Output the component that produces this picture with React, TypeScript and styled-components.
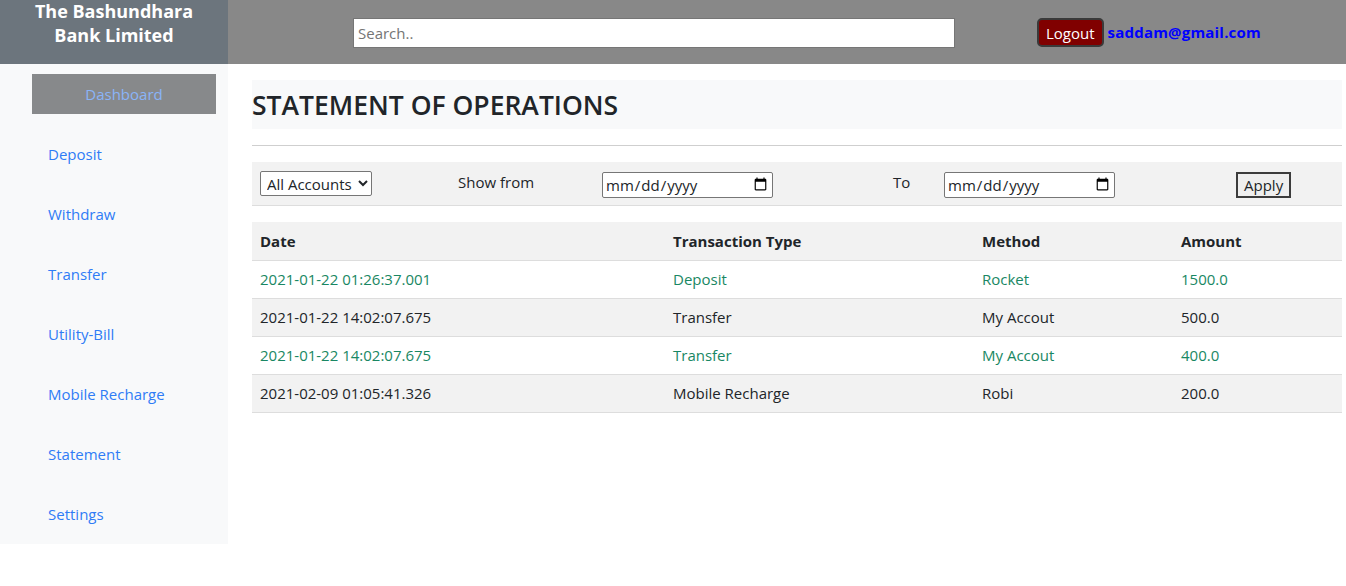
import React from "react";
import styled, { createGlobalStyle } from "styled-components";

const Global = createGlobalStyle`
  html, body { margin: 0; padding: 0; background: #fff; }
  body { font-family: "Open Sans", "Noto Sans", Arial, sans-serif; font-size: 15px; color: #212529; }
  * { box-sizing: border-box; }
`;

const Page = styled.div`
  width: 1346px;
`;

const Header = styled.header`
  display: grid;
  grid-template-columns: 228px 1fr;
  height: 64px;
`;

const Brand = styled.div`
  background: #6c757d;
  color: #fff;
  font-weight: 700;
  font-size: 18px;
  line-height: 24px;
  text-align: center;
  padding-top: 0;
`;

const BrandText = styled.div`
  margin-top: -1px;
`;

const TopBar = styled.div`
  background: #888888;
  display: flex;
  align-items: center;
  padding-left: 125px;
`;

const Search = styled.input`
  width: 602px;
  height: 30px;
  border: 1px solid #767676;
  padding: 1px 4px;
  font: inherit;
  font-size: 15px;
  color: #212529;
  margin-top: 1px;
  &::placeholder { color: #757575; }
`;

const LogoutButton = styled.button`
  margin-left: 82px;
  height: 29px;
  padding: 1px 7px 0;
  background: #800000;
  color: #fff;
  border: 2px solid #3a3a3a;
  border-radius: 5px;
  font: inherit;
  font-size: 15px;
`;

const Email = styled.a`
  margin-left: 4px;
  color: #0000ff;
  font-weight: 700;
  font-size: 15px;
  letter-spacing: 0.2px;
  text-decoration: none;
`;

const Body = styled.div`
  display: grid;
  grid-template-columns: 228px 1fr;
  align-items: start;
`;

const Sidebar = styled.nav`
  background: #f8f9fa;
  padding-top: 10px;
  height: 480px;
`;

const DashboardLink = styled.a`
  display: flex;
  align-items: center;
  justify-content: center;
  margin: 0 12px 10px 32px;
  height: 40px;
  background: #87898b;
  color: #8ab4f8;
  text-decoration: none;
`;

const NavItem = styled.a`
  display: flex;
  align-items: center;
  height: 60px;
  padding-left: 48px;
  color: #2f7cf6;
  text-decoration: none;
`;

const Main = styled.main`
  padding: 16px 4px 0 24px;
`;

const TitleBox = styled.div`
  background: #f8f9fa;
  height: 49px;
  display: flex;
  align-items: center;
`;

const Title = styled.h3`
  margin: 0;
  font-size: 26.5px;
  font-weight: 600;
  color: #212529;
`;

const Rule = styled.hr`
  margin: 16px 0;
  border: 0;
  border-top: 1px solid #cfcfcf;
`;

const FilterBar = styled.div`
  display: grid;
  grid-template-columns: 198px 144px 291px 51px 292px 1fr;
  align-items: center;
  height: 44px;
  background: #f2f2f2;
  border-bottom: 1px solid #dddddd;
`;

const FilterCell = styled.div<{ $shift?: number }>`
  padding-left: 8px;
  display: flex;
  align-items: center;
  margin-top: ${(p) => p.$shift ?? 0}px;
`;

const Select = styled.select`
  font: inherit;
  font-size: 15px;
  width: 112px;
  height: 25px;
  border: 1px solid #767676;
  border-radius: 2px;
  background: #fff;
  color: #212529;
  padding: 0 2px;
`;

const DateInput = styled.input`
  font: inherit;
  font-size: 15px;
  width: 171px;
  height: 26px;
  border: 1px solid #767676;
  border-radius: 2px;
  padding: 0 2px;
  background: #fff;
  color: #212529;
`;

const ApplyButton = styled.button`
  font: inherit;
  font-size: 15px;
  height: 26px;
  padding: 0 6px;
  background: #efefef;
  border: 2px solid #3c3c3c;
  border-radius: 0;
  color: #212529;
`;

const Table = styled.table`
  width: 100%;
  margin-top: 16px;
  border-collapse: collapse;
  table-layout: fixed;
`;

const Th = styled.th`
  text-align: left;
  font-weight: 700;
  padding: 0 8px;
  height: 38px;
  border-bottom: 1px solid #dddddd;
`;

const Row = styled.tr<{ $alt: boolean }>`
  background: ${(p) => (p.$alt ? "#f2f2f2" : "#ffffff")};
  color: ${(p) => (p.$alt ? "#212529" : "#198763")};
`;

const HeadRow = styled.tr`
  background: #f2f2f2;
`;

const Td = styled.td`
  padding: 0 8px;
  height: 38px;
  border-bottom: 1px solid #dddddd;
`;

const navItems = ["Deposit", "Withdraw", "Transfer", "Utility-Bill", "Mobile Recharge", "Statement", "Settings"];

const rows = [
  ["2021-01-22 01:26:37.001", "Deposit", "Rocket", "1500.0"],
  ["2021-01-22 14:02:07.675", "Transfer", "My Accout", "500.0"],
  ["2021-01-22 14:02:07.675", "Transfer", "My Accout", "400.0"],
  ["2021-02-09 01:05:41.326", "Mobile Recharge", "Robi", "200.0"],
];

export default function App() {
  return (
    <Page>
      <Global />
      <Header>
        <Brand>
          <BrandText>
            The Bashundhara
            <br />
            Bank Limited
          </BrandText>
        </Brand>
        <TopBar>
          <Search placeholder="Search.." />
          <LogoutButton>Logout</LogoutButton>
          <Email href="#">saddam@gmail.com</Email>
        </TopBar>
      </Header>
      <Body>
        <Sidebar>
          <DashboardLink href="#">Dashboard</DashboardLink>
          {navItems.map((n) => (
            <NavItem key={n} href="#">
              {n}
            </NavItem>
          ))}
        </Sidebar>
        <Main>
          <TitleBox>
            <Title>STATEMENT OF OPERATIONS</Title>
          </TitleBox>
          <Rule />
          <FilterBar>
            <FilterCell>
              <Select defaultValue="all">
                <option value="all">All Accounts</option>
              </Select>
            </FilterCell>
            <FilterCell $shift={-4}>Show from</FilterCell>
            <FilterCell $shift={2}>
              <DateInput type="date" />
            </FilterCell>
            <FilterCell $shift={-4}>To</FilterCell>
            <FilterCell $shift={2}>
              <DateInput type="date" />
            </FilterCell>
            <FilterCell $shift={2}>
              <ApplyButton>Apply</ApplyButton>
            </FilterCell>
          </FilterBar>
          <Table>
            <colgroup>
              <col style={{ width: 413 }} />
              <col style={{ width: 309 }} />
              <col style={{ width: 199 }} />
              <col />
            </colgroup>
            <thead>
              <HeadRow>
                <Th>Date</Th>
                <Th>Transaction Type</Th>
                <Th>Method</Th>
                <Th>Amount</Th>
              </HeadRow>
            </thead>
            <tbody>
              {rows.map((r, i) => (
                <Row key={i} $alt={i % 2 === 1}>
                  {r.map((c, j) => (
                    <Td key={j}>{c}</Td>
                  ))}
                </Row>
              ))}
            </tbody>
          </Table>
        </Main>
      </Body>
    </Page>
  );
}
